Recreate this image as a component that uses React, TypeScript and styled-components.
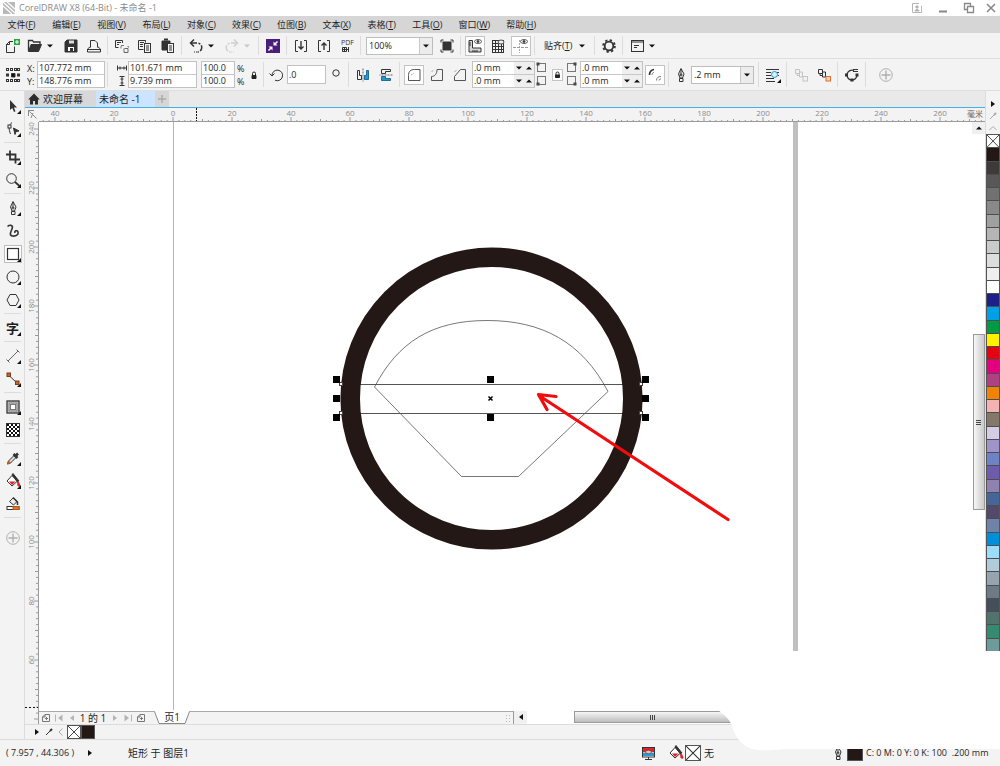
import React, { ReactNode, useEffect, useRef, useState } from "react";
import styled, { createGlobalStyle } from "styled-components";

const GlobalStyle = createGlobalStyle`
  * { box-sizing: border-box; }
  html, body { margin: 0; padding: 0; }
  body, button, input, select {
    font-family: "Open Sans", "Noto Sans CJK SC", sans-serif;
    font-size: 9px;
    line-height: 12px;
    color: #1e1e1e;
  }
  button { padding: 0; border: 0; background: none; }
`;

const Shell = styled.div`
  position: relative;
  display: flex;
  flex-direction: column;
  min-height: 100vh;
  overflow: hidden;
  background: #f3f3f3;
`;

/* ---------- title and menu ---------- */

const TitleBar = styled.header`
  display: flex;
  align-items: center;
  height: 16px;
  padding-left: 2px;
  background: #fff;
`;

const Title = styled.h1`
  flex: 1;
  margin: 0 0 0 3px;
  font-size: 9px;
  line-height: 16px;
  font-weight: 400;
  color: #8a8a8a;
`;

const WindowButton = styled.button<{ $narrow?: boolean }>`
  display: flex;
  align-items: center;
  justify-content: center;
  width: ${(p) => (p.$narrow ? 18 : 26)}px;
  height: 16px;
`;

const MenuBar = styled.nav`
  display: flex;
  height: 17px;
  background: #d6d6d6;
`;

const MenuItem = styled.button`
  min-width: 45px;
  padding: 0 9px 0 7px;
  white-space: nowrap;
`;

/* ---------- tool bars ---------- */

const Bar = styled.div<{ $height: number }>`
  display: flex;
  align-items: center;
  height: ${(p) => p.$height}px;
  border-bottom: 1px solid #dedede;
  white-space: nowrap;
`;

const Divider = styled.div`
  flex: none;
  align-self: stretch;
  width: 1px;
  margin: 3px 2px;
  background: #dcdcdc;
`;

const IconButton = styled.button<{ $width?: number; $active?: boolean; $indent?: number }>`
  flex: none;
  display: flex;
  align-items: center;
  justify-content: center;
  width: ${(p) => p.$width ?? 23}px;
  height: 20px;
  margin-left: ${(p) => p.$indent ?? 0}px;
  & > svg {
    background: ${(p) => (p.$active ? "#fff" : "none")};
    outline: ${(p) => (p.$active ? "1px solid #c4c4c4" : "none")};
  }
`;

const DropButton = styled.button`
  flex: none;
  display: flex;
  align-items: center;
  width: 13px;
  height: 20px;
  padding-left: 1px;
`;

const SnapButton = styled.button`
  flex: none;
  display: flex;
  align-items: center;
  gap: 7px;
  width: 55px;
  height: 20px;
  padding-left: 7px;
`;

const Caret = styled.span<{ $size?: number; $up?: boolean; $muted?: boolean }>`
  display: block;
  width: 0;
  height: 0;
  border: ${(p) => p.$size ?? 3}px solid transparent;
  border-top-color: ${(p) => (p.$up ? "transparent" : p.$muted ? "#c8c8c8" : "#111")};
  border-bottom-color: ${(p) => (p.$up ? "#111" : "transparent")};
  transform: translateY(${(p) => (p.$up ? "-25%" : "25%")});
`;

const SideCaret = styled.span<{ $left?: boolean; $muted?: boolean }>`
  display: block;
  width: 0;
  height: 0;
  border-style: solid;
  border-width: ${(p) => (p.$left ? "3px 4px 3px 0" : "3px 0 3px 4px")};
  border-color: transparent ${(p) => (p.$muted ? "#b4b4b4" : "#111")};
`;

const Combo = styled.div<{ $width: number; $indent: number }>`
  position: relative;
  flex: none;
  display: flex;
  width: ${(p) => p.$width}px;
  height: 18px;
  margin: 0 2px 0 ${(p) => p.$indent}px;
  border: 1px solid #bdbdbd;
  background: #fff;
`;

const ComboSelect = styled.select`
  appearance: none;
  flex: 1;
  min-width: 0;
  height: 16px;
  padding: 0 16px 0 2px;
  border: 0;
  background: transparent;
`;

const ComboArrow = styled.span`
  position: absolute;
  right: 0;
  top: 0;
  display: flex;
  align-items: center;
  justify-content: center;
  width: 13px;
  height: 16px;
  border-left: 1px solid #c8c8c8;
  background: #ececec;
  pointer-events: none;
`;

const Stack = styled.div<{ $width?: number; $indent?: number; $boxed?: boolean }>`
  flex: none;
  display: flex;
  flex-direction: column;
  width: ${(p) => (p.$width ? p.$width + "px" : "auto")};
  margin-left: ${(p) => p.$indent ?? 0}px;
  border: ${(p) => (p.$boxed ? "1px solid #c2c2c2" : "0")};
  background: ${(p) => (p.$boxed ? "#fff" : "none")};
`;

const FieldRow = styled.div`
  display: flex;
  height: 12px;
  & + & {
    height: 13px;
    border-top: 1px solid #c8c8c8;
  }
`;

const Field = styled.input`
  flex: 1;
  min-width: 0;
  height: 12px;
  padding: 0 1px;
  border: 0;
  background: transparent;
`;

const Spins = styled.span`
  display: flex;
  align-items: center;
  justify-content: space-around;
  width: 20px;
  height: 12px;
  background: #efefef;
`;

const StackLabel = styled.label`
  height: 13px;
  line-height: 13px;
`;

const StackIcon = styled.span`
  display: flex;
  align-items: center;
  justify-content: center;
  height: 13px;
`;

const RotationField = styled.input`
  flex: none;
  width: 39px;
  height: 19px;
  padding: 0 1px;
  border: 1px solid #c2c2c2;
  background: #fff;
`;

/* ---------- work area ---------- */

const WorkArea = styled.main`
  flex: 1;
  display: flex;
`;

const Toolbox = styled.div`
  flex: none;
  width: 24px;
  padding-top: 3px;
  background: #f3f3f3;
`;

const Tool = styled.button<{ $tall?: boolean }>`
  position: relative;
  display: flex;
  align-items: center;
  justify-content: center;
  width: 25px;
  height: ${(p) => (p.$tall ? 36 : 23)}px;
  font-size: 13px;
  font-weight: 700;
  line-height: 16px;
`;

const Flyout = styled.span`
  position: absolute;
  right: 4px;
  bottom: 3px;
  border-left: 4px solid transparent;
  border-bottom: 4px solid #111;
`;

const ToolDivider = styled.div`
  height: 1px;
  margin: 2px 3px 2px 4px;
  background: #dcdcdc;
`;

const DocumentColumn = styled.section`
  flex: 1;
  min-width: 0;
  display: flex;
  flex-direction: column;
  border-left: 1px solid #dcdcdc;
`;

const TabStrip = styled.div`
  display: flex;
  height: 16px;
  background: #e9e9e9;
`;

const Tab = styled.button<{ $width: number; $color: string; $pad?: number }>`
  display: flex;
  align-items: center;
  gap: 3px;
  width: ${(p) => p.$width}px;
  padding-left: ${(p) => p.$pad ?? 3}px;
  background: ${(p) => p.$color};
  font-size: 10px;
  white-space: nowrap;
`;

const RulerRow = styled.div`
  display: flex;
  height: 15px;
  border-top: 1px solid #3fb2e6;
  background: #f3f3f3;
`;

const RulerCorner = styled.div`
  flex: none;
  width: 14px;
  padding-left: 1px;
`;

const RulerScale = styled.div`
  position: relative;
  flex: 1;
  min-width: 0;
  border-bottom: 1px solid #9a9a9a;
`;

const RulerUnit = styled.span`
  position: absolute;
  right: 2px;
  top: 0;
  font-size: 8px;
  line-height: 11px;
  color: #666;
  background: #f3f3f3;
`;

const FillSvg = styled.svg`
  position: absolute;
  inset: 0;
  width: 100%;
  height: 100%;
`;

const DocumentBody = styled.div`
  flex: 1;
  display: flex;
`;

const SideRuler = styled.div`
  position: relative;
  flex: none;
  width: 14px;
  border-right: 1px solid #9a9a9a;
`;

const CanvasColumn = styled.div`
  flex: 1;
  min-width: 0;
  display: flex;
  flex-direction: column;
`;

const CanvasRow = styled.div`
  flex: 1;
  display: flex;
  background: #fff;
`;

const Canvas = styled.div`
  position: relative;
  flex: 1;
  min-height: 560px;
  overflow: hidden;
`;

const VScroll = styled.div`
  flex: none;
  display: flex;
  flex-direction: column;
  align-items: center;
  width: 13px;
`;

const ScrollButton = styled.button`
  flex: none;
  display: flex;
  align-items: center;
  justify-content: center;
  width: 13px;
  height: 12px;
  background: #f0f0f0;
`;

const VThumb = styled.div`
  display: flex;
  flex-direction: column;
  align-items: center;
  justify-content: center;
  gap: 1px;
  width: 12px;
  height: 176px;
  margin-top: 200px;
  border: 1px solid #9a9a9a;
  background: linear-gradient(90deg, #f6f6f6, #c9c9c9);
`;

const HThumb = styled.div`
  display: flex;
  align-items: center;
  justify-content: center;
  gap: 1px;
  width: 157px;
  height: 12px;
  margin-left: 47px;
  border: 1px solid #9a9a9a;
  background: linear-gradient(#f6f6f6, #bdbdbd);
`;

const Grip = styled.span<{ $across?: boolean }>`
  width: ${(p) => (p.$across ? 5 : 1)}px;
  height: ${(p) => (p.$across ? 1 : 5)}px;
  background: #444;
`;

const NavRow = styled.div`
  display: flex;
  height: 13px;
`;

const PageNav = styled.div`
  display: flex;
  align-items: center;
  width: 475px;
  border-top: 1px solid #a8a8a8;
  border-right: 1px solid #9a9a9a;
  background: #f3f3f3;
`;

const NavButton = styled.button`
  display: flex;
  align-items: center;
  justify-content: center;
  width: 13px;
  height: 12px;
`;

const PageCount = styled.span`
  width: 30px;
  font-size: 10px;
  text-align: center;
  white-space: nowrap;
`;

const PageTab = styled.button`
  position: relative;
  width: 36px;
  height: 14px;
  margin: -2px 0 0 7px;
  font-size: 10px;
  line-height: 14px;
  & > svg { position: absolute; left: 0; top: 0; }
  & > span { position: relative; }
`;

const SplitGrip = styled.span`
  width: 7px;
  height: 9px;
  margin: 0 1px 0 auto;
  background: radial-gradient(circle, #bbb 1px, transparent 1px) 0 0 / 3px 3px;
`;

const HTrack = styled.div`
  flex: 1;
  display: flex;
  background: #fff;
`;

const DocPalette = styled.div`
  display: flex;
  align-items: center;
  height: 15px;
  padding-left: 6px;
  border-top: 1px solid #dcdcdc;
`;

const PaletteButton = styled.button`
  display: flex;
  align-items: center;
  justify-content: center;
  width: 12px;
  height: 12px;
`;

const Swatch = styled.button<{ $color: string; $size?: number }>`
  flex: none;
  display: block;
  width: ${(p) => p.$size ?? 14}px;
  height: ${(p) => p.$size ?? 14}px;
  border: 1px solid #555;
  background: ${(p) => p.$color};
  & > svg { display: block; width: 100%; height: 100%; }
`;

const ColorRail = styled.aside`
  flex: none;
  display: flex;
  flex-direction: column;
  align-items: center;
  width: 15px;
  padding-top: 7px;
  border-left: 1px solid #dcdcdc;
`;

const ColorList = styled.div`
  display: flex;
  flex-direction: column;
  width: 14px;
  height: 518px;
  border: 1px solid #555;
  border-bottom: 0;
`;

const ColorCell = styled.button<{ $color: string }>`
  flex: 1;
  min-height: 0;
  background: ${(p) => p.$color};
  border-bottom: 1px solid #4d4d4d;
  & > svg { display: block; width: 100%; height: 100%; }
`;

/* ---------- status bar ---------- */

const StatusBar = styled.footer`
  display: flex;
  align-items: center;
  height: 27px;
  padding-left: 6px;
  border-top: 1px solid #dcdcdc;
  white-space: nowrap;
`;

const StatusPart = styled.div<{ $width?: number }>`
  display: flex;
  align-items: center;
  flex: ${(p) => (p.$width ? "none" : "1")};
  width: ${(p) => (p.$width ? p.$width + "px" : "auto")};
`;

const Coordinates = styled.span`
  width: 82px;
`;

const StatusText = styled.span<{ $gap?: number }>`
  margin-left: ${(p) => p.$gap ?? 0}px;
`;

const StatusName = styled(StatusText)`
  font-size: 10px;
`;

const Erased = styled.svg`
  position: absolute;
  right: 0;
  bottom: 15px;
  pointer-events: none;
`;

/* ---------- icons ---------- */

const INK = "#333";

function Icon({ children, size = 18, color = INK }: { children: ReactNode; size?: number; color?: string }) {
  return (
    <svg width={size} height={size} viewBox={`0 0 ${size} ${size}`} fill="none" stroke={color} strokeWidth="1">
      {children}
    </svg>
  );
}

const Plus = () => (
  <Icon color="#b0b0b0">
    <circle cx="9" cy="9" r="6.3" />
    <path d="M9 4.5v9M4.5 9h9" strokeWidth="1.4" />
  </Icon>
);

const NewIcon = () => (
  <Icon>
    <path d="M10 4.500H6.500L3.500 7.500v8h8V9.500M6.500 4.500v3h-3" />
    <rect x="11" y="2" width="6" height="6" fill="#2aa343" stroke="none" />
    <path d="M14 3v4M12 5h4" stroke="#fff" />
  </Icon>
);
const OpenIcon = () => (
  <Icon>
    <path d="M2.500 14V3.500h4l1 1.500h6.500v2.500" strokeWidth="1.300" />
    <path d="M2.500 14.500l2.500-7h10.500l-3 7z" fill={INK} />
  </Icon>
);
const SaveIcon = () => (
  <Icon>
    <path d="M3 5l2-2h10v12H3z" fill={INK} />
    <path d="M6 10h6v4H6z" fill="#fff" stroke="none" />
    <path d="M7 3.500h5v3H7z" fill="#ddd" stroke="none" />
    <path d="M8 11v3h3v-3z" fill={INK} stroke="none" />
  </Icon>
);
const PrintIcon = () => (
  <Icon>
    <path d="M5.500 10.500V3.500h4.500l2.500 2.500v4.500M5.500 9.500L2.500 12v3h13v-3l-3-2.500M2.500 12.500h13" />
  </Icon>
);
const CutIcon = () => (
  <Icon>
    <path d="M9.500 6V3.500h-7v7h3M4 5.500h4M4 7.500h2" />
    <path d="M8 8.500h3M8 9v2.500" stroke="#777" />
    <path d="M11.500 11.500h3.500v4h-4v-4M14.500 9.500h1v1" stroke="#666" />
  </Icon>
);
const CopyIcon = () => (
  <Icon>
    <path d="M7.500 12.500h-5v-9h7v2M4 5.500h4M4 7.500h3M4 9.500h3" />
    <rect x="8.500" y="6.500" width="6" height="9" />
    <path d="M10 9h3M10 11h3M10 13h3" />
  </Icon>
);
const PasteIcon = () => (
  <Icon>
    <path d="M3 4h8v2H8v7H3z" fill={INK} />
    <path d="M5 2.500h4" strokeWidth="2" />
    <rect x="8.500" y="6.500" width="6" height="9" fill="#f3f3f3" />
    <path d="M10 9h3M10 11h3M10 13h3" />
  </Icon>
);
const UndoIcon = () => (
  <Icon>
    <path d="M7 2.500L3.500 6 7 9.500" strokeWidth="1.500" />
    <path d="M4 6h6a4.500 4.500 0 0 1 .5 9" strokeWidth="1.500" strokeDasharray="6 1.500 2 1.500" />
    <path d="M10 15H6.500" strokeDasharray="1 1" />
  </Icon>
);
const RedoIcon = () => (
  <Icon color="#cfcfcf">
    <path d="M11 2.500L14.500 6 11 9.500" strokeWidth="1.500" />
    <path d="M14 6H8a4.500 4.500 0 0 0-.5 9" strokeWidth="1.500" strokeDasharray="6 1.500 2 1.500" />
    <path d="M8 15h3.500" strokeDasharray="1 1" />
  </Icon>
);
const ConnectIcon = () => (
  <Icon>
    <rect x="2" y="2" width="14" height="14" fill="#4b1d7a" stroke="none" />
    <path d="M4.500 13.500l3-3M13.500 4.500l-3 3" stroke="#fff" strokeWidth="1.500" />
    <path d="M4.500 9.500h4v4zM13.500 8.500h-4v-4z" fill="#fff" stroke="none" />
  </Icon>
);
const ImportIcon = ({ up }: { up?: boolean }) => (
  <Icon>
    <path d="M6 3.500H3.500v11H6M12 3.500h2.500v11H12" />
    <path d={up ? "M9 13V6M6.500 8.500L9 6l2.500 2.500" : "M9 4v8M6.500 9.500L9 12l2.500-2.500"} strokeWidth="1.400" />
  </Icon>
);
const PdfIcon = () => (
  <Icon>
    <text x="3" y="8" fontSize="7" fill={INK} stroke="none">PDF</text>
    <path d="M4.500 10.500h4v4h-4zM4.500 12.500h6M6.500 10.500v4M10.500 10v5" />
  </Icon>
);
const FullScreenIcon = () => (
  <Icon>
    <rect x="5" y="5" width="8" height="8" fill={INK} />
    <path d="M3 5.500V3h2.500M12.500 3H15v2.500M15 12.500V15h-2.500M5.500 15H3v-2.500" />
  </Icon>
);
const Eye = () => (
  <g strokeWidth=".8">
    <ellipse cx="12" cy="4.500" rx="3.500" ry="2" />
    <circle cx="12" cy="4.500" r="1" fill={INK} />
  </g>
);
const RulersIcon = () => (
  <Icon>
    <path d="M3 3.500h3.500v7.500H15v4H3z" fill="#d5d5d5" />
    <path d="M3 6h2M3 8h2M7 15v-2M9 15v-2M11 15v-2" />
    <Eye />
  </Icon>
);
const GridIcon = () => (
  <Icon>
    <path d="M3 3.500h12M3 6.500h12M3 9.500h12M3 12.500h12M3 15.500h12M3.500 3v13M6.500 3v13M9.500 3v13M12.500 3v13M14.500 3v13" />
    <ellipse cx="12" cy="5" rx="3" ry="2" fill="#eee" strokeWidth=".8" />
  </Icon>
);
const GuidesIcon = () => (
  <Icon>
    <path d="M7.500 3v13" strokeDasharray="2 1" stroke="#aaa" />
    <path d="M1 10.500h15" strokeDasharray="3 1" stroke="#999" />
    <Eye />
  </Icon>
);
const GearIcon = () => (
  <Icon>
    <circle cx="9" cy="9" r="4.300" strokeWidth="1.800" />
    <circle cx="9" cy="9" r="5.900" strokeWidth="1.800" strokeDasharray="2.300 2.334" />
  </Icon>
);
const LaunchIcon = () => (
  <Icon>
    <rect x="3.500" y="3.500" width="12" height="11" />
    <path d="M3.500 5h12M6 8.500h5M6 10.500h3" />
  </Icon>
);
const OriginIcon = () => (
  <Icon>
    {[3.5, 7.5, 11.5, 14.5].flatMap((x) =>
      [3.5, 9, 14.5]
        .filter((y) => y !== 9 || x < 4 || x > 14)
        .map((y) => <rect key={`${x}-${y}`} x={x - 1} y={y - 1} width="2" height="2" fill="#f3f3f3" />)
    )}
    <path d="M7.500 7.500h3.500v3.500H7.500z" fill="#111" />
  </Icon>
);
const LockIcon = () => (
  <svg width="8" height="10" viewBox="0 0 8 10" fill="none" stroke="#222">
    <path d="M2.500 5V3.500a1.500 1.500 0 0 1 3 0V5" />
    <path d="M2 5.500h4v3H2z" fill="#222" />
  </svg>
);
const BoxedLockIcon = () => (
  <svg width="11" height="12" viewBox="0 0 11 12" fill="none" stroke="#222">
    <rect x=".5" y=".5" width="10" height="11" fill="#fff" stroke="#c4c4c4" />
    <path d="M4 6V4.500a1.500 1.500 0 0 1 3 0V6" />
    <path d="M3.500 6h4v2.500h-4z" fill="#222" />
  </svg>
);
const RotateIcon = () => (
  <Icon>
    <path d="M4 9.500a5.300 5.300 0 1 1 3 4.700" />
    <path d="M1.500 7.500L4 10l2.500-2.500" />
  </Icon>
);
const DegreeIcon = () => (
  <Icon>
    <circle cx="9" cy="7" r="3.200" />
  </Icon>
);
const MirrorIcon = ({ vertical }: { vertical?: boolean }) => (
  <Icon>
    <g transform={vertical ? "rotate(90 9 9)" : undefined}>
      <path d="M3.500 4.500h2v5h2v4h-4z" />
      <path d="M9 2.500v13" strokeDasharray="2 1" stroke="#666" />
      <path d="M14.500 4.500h-2v5h-2v4h4z" fill="#2b96c8" stroke="#1c6f99" />
    </g>
  </Icon>
);
const CornerIcon = ({ kind }: { kind: "round" | "scallop" | "chamfer" }) => (
  <Icon color="#555">
    <path
      d={
        kind === "round"
          ? "M3.500 14.500V9.500c0-4 2-6 6-6h5.500v11z"
          : kind === "scallop"
          ? "M3.500 14.500V10.500c3.500 0 5.500-3 5.500-7h5.500v11z"
          : "M3.500 14.500V10.500l6-7h5v11z"
      }
    />
    <path d={kind === "round" ? "M6 9l3-2" : "M3.500 6l2.500-2.500"} stroke="#888" strokeDasharray="1 1" />
  </Icon>
);
const CornerSpot = ({ x, y }: { x: number; y: number }) => (
  <svg width="12" height="12" viewBox="0 0 12 12" fill="none" stroke="#777">
    <rect x="1.500" y="1.500" width="8" height="8" />
    <rect x={x} y={y} width="2" height="2" fill="#555" stroke="#444" />
  </svg>
);
const RelativeIcon = () => (
  <Icon>
    <path d="M3.500 9c0-3 1.500-5 4.500-5.500" strokeWidth="1.700" />
    <path d="M6 9c0-1.500 .5-2.500 2-2.500" stroke="#888" />
    <path d="M10.500 14.500c0-2.500 1.500-4 4.500-4M13 14.500c0-1 .5-1.500 2-1.500" stroke="#777" />
  </Icon>
);
const PenIcon = () => (
  <Icon>
    <path d="M9 2.500L6.500 8l1.500 4h2.500L12 8zM9 3v6M7.500 12.500v3h3.500v-3z" />
    <circle cx="9" cy="9" r="1" />
  </Icon>
);
const WrapIcon = () => (
  <Icon>
    <path d="M2 3.500h13M2 6.500h5M2 9.500h5M2 12.500h8M2 15.500h9M13 6.500h2M14 9.500h1" />
    <circle cx="10.500" cy="8.500" r="3" fill="#d6effb" stroke="#1b93cf" />
    <path d="M17 13v4h-4z" fill="#111" stroke="none" />
  </Icon>
);
const OrderIcon = ({ muted }: { muted?: boolean }) => (
  <Icon color={muted ? "#c4c4c4" : INK}>
    <path d="M3.500 3.500h4v4h-4zM5 8v1.500h3M7.500 6h3v5h-3z" />
    <rect x="11" y="10.500" width="4.500" height="4.500" stroke={muted ? "#c4c4c4" : "#e2702c"} fill={muted ? "none" : "#f8d3bb"} />
  </Icon>
);
const CurveIcon = () => (
  <Icon>
    <path d="M11 4.500a5 5 0 1 0 3 4.500" strokeWidth="1.300" />
    <path d="M10 3.500h5M10 5.500h5" />
    <rect x="2.500" y="8" width="2" height="2" fill={INK} />
    <rect x="8" y="13" width="2" height="2" fill={INK} />
    <rect x="13" y="8" width="2" height="2" fill={INK} />
  </Icon>
);

const PickIcon = () => (
  <Icon>
    <path d="M6 3v10l2.300-2 1.700 4 1.500-.8-1.600-3.700H13z" fill={INK} stroke="none" />
  </Icon>
);
const ShapeIcon = () => (
  <Icon>
    <path d="M8 2.500C4.500 5 4.500 9 6.500 14" />
    <rect x="4" y="5" width="3" height="3" fill="#f3f3f3" />
    <path d="M9.500 8l5.500 3-3 .5-1 3z" fill={INK} />
  </Icon>
);
const CropIcon = () => (
  <Icon>
    <path d="M6 2.500v9h10M2 6.500h9.500v9" strokeWidth="1.800" />
  </Icon>
);
const ZoomIcon = () => (
  <Icon>
    <circle cx="7.500" cy="7.500" r="4.800" />
    <path d="M11 11l4.500 4" strokeWidth="1.800" />
  </Icon>
);
const FreehandIcon = () => (
  <Icon>
    <path d="M3.500 4.500c3-2.500 6-1 4.500 2.500S5 13.500 8.500 14s6.500-1.500 5.500-4-4-1-3 1" strokeWidth="1.600" />
  </Icon>
);
const RectIcon = () => (
  <Icon>
    <rect x=".5" y=".5" width="17" height="17" fill="#fff" stroke="#bcbcbc" />
    <rect x="3.500" y="3.500" width="11" height="11" strokeWidth="1.200" />
  </Icon>
);
const EllipseIcon = () => (
  <Icon>
    <circle cx="9" cy="9" r="6" />
  </Icon>
);
const PolygonIcon = () => (
  <Icon>
    <path d="M6 3.500h6L15 9l-3 5.500H6L3 9z" />
  </Icon>
);
const DimensionIcon = () => (
  <Icon color="#666">
    <path d="M4 14L14 4M2.500 12.500l3 3M12.500 2.500l3 3" />
  </Icon>
);
const ConnectorIcon = () => (
  <Icon>
    <path d="M4.500 5L13 13" />
    <rect x="3" y="3" width="3.500" height="3.500" fill="#c0672b" stroke="#7d3c12" />
    <rect x="11.500" y="11" width="3.500" height="3.500" fill="#c0672b" stroke="#7d3c12" />
  </Icon>
);
const ContourIcon = () => (
  <Icon>
    <rect x="3" y="3" width="12" height="12" fill="#d8d8d8" strokeWidth="1.300" />
    <rect x="5" y="5" width="8" height="8" stroke="#777" />
    <rect x="6.500" y="6.500" width="5" height="5" fill="#fff" stroke="#777" />
  </Icon>
);
const CheckerIcon = () => (
  <Icon>
    <rect x="2.500" y="2.500" width="13" height="13" fill="#fff" />
    {[0, 1, 2, 3, 4, 5].flatMap((r) =>
      [0, 1, 2].map((c) => (
        <rect key={`${r}-${c}`} x={3 + c * 4 + (r % 2) * 2} y={3 + r * 2} width="2" height="2" fill="#111" stroke="none" />
      ))
    )}
  </Icon>
);
const DropperIcon = () => (
  <Icon>
    <path d="M3.500 15l1-3 5.500-5.500 2 2L6.500 14z" fill="#ddd" />
    <path d="M3.500 15l1-3 2 2z" fill="#d9752f" stroke="#b0561b" />
    <path d="M9.500 5l4 4M12 6.500l2-2" strokeWidth="2.600" />
  </Icon>
);
const FillIcon = () => (
  <Icon>
    <path d="M3 9l5-5.500 5.500 5.500-5.500 5z" fill="#fff" />
    <path d="M8 3l1-1.500L15 9l-2 .5z" fill={INK} />
    <path d="M5 9.500h6.500L8 13z" fill="#e0232a" stroke="none" />
    <path d="M13 10h2l1.500 3.500-1 1.500-2-1z" fill="#e0232a" stroke="none" />
  </Icon>
);
const SmartFillIcon = () => (
  <Icon>
    <path d="M5.500 6.500L9 3l4 3.500L9.500 10z" fill="#eee" />
    <path d="M9 2.500L13.500 7v3" strokeWidth="1.500" />
    <rect x="3" y="11.500" width="12" height="3" fill="#fff" />
    <rect x="9" y="11.500" width="6" height="3" fill="#d9752f" stroke="#b0561b" />
  </Icon>
);
const HomeIcon = () => (
  <svg width="12" height="12" viewBox="0 0 12 12" fill="#2c2c2c">
    <path d="M6 .5L.2 6.500H2V11.500h3V8h2v3.500h3v-5h1.800z" />
  </svg>
);
const MiniDropper = ({ muted }: { muted?: boolean }) => (
  <Icon size={10} color={muted ? "#aaa" : INK}>
    <path d="M2 8l4-4" />
    <path d="M6 4l2-2" strokeWidth="2" />
  </Icon>
);
const Chevron = ({ up }: { up?: boolean }) => (
  <Icon size={10} color="#aaa">
    <path d={up ? "M1.500 7L5 3.500 8.500 7" : "M6.500 1.500L3 5l3.500 3.500"} />
  </Icon>
);
const Cross = () => (
  <svg viewBox="0 0 12 12" preserveAspectRatio="none" stroke="#333" strokeWidth=".9">
    <path d="M0 0l12 12M12 0L0 12" />
  </svg>
);
const PageIcon = () => (
  <Icon size={10} color="#777">
    <path d="M4 1.500h4.500v7h-7V4zM4 1.500V4H1.500M5.500 4v3M4 5.500h3" />
  </Icon>
);
const JumpIcon = ({ last }: { last?: boolean }) => (
  <Icon size={10} color="#b4b4b4">
    <g transform={last ? "rotate(180 5 5)" : undefined}>
      <path d="M1.500 1.500v7" />
      <path d="M8.500 1.500v7L4 5z" fill="#b4b4b4" stroke="none" />
    </g>
  </Icon>
);
const ProofIcon = () => (
  <Icon>
    <rect x="2.500" y="3.500" width="12" height="9.500" fill="#fff" />
    <path d="M3 4h11v4H3z" fill="#e0232a" stroke="none" />
    <path d="M3 8.500h11V12H3z" fill="#2b9bd8" stroke="none" />
    <ellipse cx="8.500" cy="8" rx="3" ry="1.800" fill="#f3b7b9" strokeWidth=".6" />
    <path d="M5 15.500h7M8.500 13v2" />
  </Icon>
);

/* ---------- data ---------- */

const MENUS: [string, string][] = [
  ["文件", "F"], ["编辑", "E"], ["视图", "V"], ["布局", "L"], ["对象", "C"], ["效果", "C"],
  ["位图", "B"], ["文本", "X"], ["表格", "T"], ["工具", "O"], ["窗口", "W"], ["帮助", "H"],
];

const COLORS = [
  "#231815", "#3e3a39", "#595757", "#727171", "#898989", "#9fa0a0", "#b5b5b6", "#c9caca", "#dcdddd",
  "#efefef", "#ffffff", "#1d2088", "#00a0e9", "#009944", "#fff100", "#e60012", "#e4007f", "#ae4084",
  "#f08300", "#f5b2b2", "#84786b", "#d3cde6", "#a093c7", "#6c84c5", "#6e5bab", "#8f82b0", "#46659b",
  "#54486b", "#6d84a8", "#0090db", "#9bddfb", "#b0cbd9", "#94a5b0", "#6c7b86", "#454f5b", "#50736e",
  "#358a70", "#6c9b99",
];

const TOOLS: ([string, ReactNode, boolean] | null)[] = [
  ["选择", <PickIcon />, true], ["形状", <ShapeIcon />, true], null,
  ["裁剪", <CropIcon />, true], ["缩放", <ZoomIcon />, true], null,
  ["手绘", <PenIcon />, true], ["艺术笔", <FreehandIcon />, false], ["矩形", <RectIcon />, true],
  ["椭圆形", <EllipseIcon />, true], ["多边形", <PolygonIcon />, true], null,
  ["文本", "字", true], null,
  ["平行度量", <DimensionIcon />, true], ["连接器", <ConnectorIcon />, true], null,
  ["轮廓图", <ContourIcon />, true], ["透明度", <CheckerIcon />, false], null,
  ["颜色滴管", <DropperIcon />, true], ["交互式填充", <FillIcon />, true], ["智能填充", <SmartFillIcon />, false], null,
];

/* ---------- pieces ---------- */

const Btn = ({ label, children, ...rest }: { label: string; children: ReactNode; $width?: number; $active?: boolean; $indent?: number }) => (
  <IconButton aria-label={label} {...rest}>{children}</IconButton>
);

const Drop = ({ label, muted }: { label: string; muted?: boolean }) => (
  <DropButton aria-label={label}><Caret $muted={muted} /></DropButton>
);

function FieldPair({ names, values, ids, width, indent, spin }: {
  names: string[]; values: string[]; ids?: string[]; width: number; indent?: number; spin?: boolean;
}) {
  return (
    <Stack $width={width} $indent={indent} $boxed>
      {values.map((v, i) => (
        <FieldRow key={i}>
          <Field id={ids?.[i]} aria-label={names[i]} defaultValue={v} />
          {spin && <Spins><Caret $size={3} /><Caret $size={3} $up /></Spins>}
        </FieldRow>
      ))}
    </Stack>
  );
}

const STEP = 59;

/* Length of a ruler, so that only the marks that fit on it are drawn. */
function useExtent(side: "clientWidth" | "clientHeight") {
  const ref = useRef<HTMLDivElement>(null);
  const [extent, setExtent] = useState(0);
  useEffect(() => {
    const el = ref.current;
    if (!el) return;
    const measure = () => setExtent(el[side]);
    measure();
    const observer = new ResizeObserver(measure);
    observer.observe(el);
    return () => observer.disconnect();
  }, [side]);
  return [ref, extent] as const;
}

function TopRuler() {
  const [ref, extent] = useExtent("clientWidth");
  const zero = 134;
  const at = (m: number) => zero + (m * STEP) / 10;
  const marks = Array.from({ length: Math.max(0, Math.floor((extent - zero) / 5.9) + 23) }, (_, i) => i - 22);
  return (
    <RulerScale ref={ref}>
      <FillSvg aria-hidden="true">
        {marks.map((m) => (
          <line key={m} x1={at(m)} x2={at(m)} y1={m % 10 === 0 ? 9 : m % 5 === 0 ? 11 : 12} y2="13" stroke="#9a9a9a" />
        ))}
        {marks.filter((m) => m % 10 === 0 && at(m) < extent - 30).map((m) => (
          <text key={m} x={at(m)} y="8" fontSize="8" textAnchor="middle" fill="#8c8c8c">{Math.abs(m * 2)}</text>
        ))}
        <path d="M157.500 0v14" stroke="#111" strokeDasharray="2 1" />
      </FillSvg>
      <RulerUnit>毫米</RulerUnit>
    </RulerScale>
  );
}

function LeftRuler() {
  const [ref, extent] = useExtent("clientHeight");
  const first = 7;
  const at = (m: number) => first + (m * STEP) / 10;
  const marks = Array.from({ length: Math.max(0, Math.floor((extent - first) / 5.9) + 1) }, (_, i) => i);
  return (
    <SideRuler ref={ref}>
      <FillSvg aria-hidden="true">
        {marks.map((m) => (
          <line key={m} x1={m % 10 === 0 ? 9 : m % 5 === 0 ? 10 : 11} x2="13" y1={at(m)} y2={at(m)} stroke="#9a9a9a" />
        ))}
        {marks.filter((m) => m % 10 === 0 && at(m) < extent - 16).map((m) => (
          <text key={m} transform={`translate(9 ${at(m)}) rotate(-90)`} fontSize="8" textAnchor="middle" fill="#8c8c8c">
            {Math.abs(240 - m * 2)}
          </text>
        ))}
        <path d="M0 585.500h13" stroke="#111" strokeDasharray="2 2" />
      </FillSvg>
    </SideRuler>
  );
}

function Drawing() {
  return (
    <FillSvg role="img" aria-label="图层1">
      <g transform="translate(-39 -122)" fill="none">
        <path d="M173.500 100v2000" stroke="#b5b5b5" />
        <rect x="793" y="100" width="5" height="2000" fill="#c0c0c0" />
        <path d="M341 384.500h301M341 413.500h301" stroke="#555" />
        <path
          d="M374.500 387C398 342 432 320.500 487 320.500S582 342 608 391.500L518.500 476.500H461.500Z"
          stroke="#555"
          strokeWidth=".8"
        />
        <circle cx="491.500" cy="398.500" r="141.300" stroke="#231815" strokeWidth="19.600" />
        {[341, 641].flatMap((x) =>
          [384, 413].map((y) => <rect key={`${x}-${y}`} x={x - 1.5} y={y - 1.5} width="3" height="3" fill="#fff" stroke="#444" />)
        )}
        {[336, 490.5, 645.5].flatMap((x) =>
          [379.5, 398.5, 417.5]
            .filter((y) => !(x === 490.5 && y === 398.5))
            .map((y) => <rect key={`${x}-${y}`} x={Math.floor(x - 3)} y={y - 3.5} width="7" height="7" fill="#000" />)
        )}
        <path d="M488.500 396.500l4 4M492.500 396.500l-4 4" stroke="#000" strokeWidth="1.500" />
        <path d="M728 519.500L539 395.500M556 396.500L538.500 394.500 547 409.500" stroke="#f20d0d" strokeWidth="3.200" strokeLinecap="round" strokeLinejoin="round" />
      </g>
    </FillSvg>
  );
}

export default function App() {
  return (
    <Shell>
      <GlobalStyle />
      <TitleBar>
        <svg width="14" height="14" viewBox="0 0 14 14" aria-hidden="true">
          <rect x="1" y="1" width="12" height="12" fill="#b9b9b9" />
          <path d="M1 1l12 11M5 1l8 7M1 5l9 8" stroke="#fff" strokeWidth="1.200" />
        </svg>
        <Title>CorelDRAW X8 (64-Bit) - 未命名 -1</Title>
        <WindowButton aria-label="登录">
          <Icon size={12} color="#b5b5b5">
            <path d="M8 1.500H1.500v9h9V4" />
            <circle cx="6" cy="5" r="1.200" fill="#aaa" />
            <path d="M4 9c0-2 4-2 4 0z" fill="#aaa" />
          </Icon>
        </WindowButton>
        <WindowButton aria-label="最小化">
          <Icon size={12} color="#888"><path d="M2 9.500h8" strokeWidth="2" /></Icon>
        </WindowButton>
        <WindowButton aria-label="还原">
          <Icon size={12} color="#888"><path d="M4 7.500H1.500v-6h6V4M4.500 4.500h6v6h-6z" strokeWidth="1.300" /></Icon>
        </WindowButton>
        <WindowButton aria-label="关闭" $narrow>
          <Icon size={12} color="#888"><path d="M2 2l8 8M10 2l-8 8" strokeWidth="1.600" /></Icon>
        </WindowButton>
      </TitleBar>

      <MenuBar>
        {MENUS.map(([name, key]) => (
          <MenuItem key={name}>{name}(<u>{key}</u>)</MenuItem>
        ))}
      </MenuBar>

      <Bar $height={26}>
        <Btn label="新建"><NewIcon /></Btn>
        <Btn label="打开"><OpenIcon /></Btn>
        <Drop label="最近的文档" />
        <Btn label="保存"><SaveIcon /></Btn>
        <Btn label="打印"><PrintIcon /></Btn>
        <Divider />
        <Btn label="剪切"><CutIcon /></Btn>
        <Btn label="复制"><CopyIcon /></Btn>
        <Btn label="粘贴"><PasteIcon /></Btn>
        <Divider />
        <Btn label="撤消"><UndoIcon /></Btn>
        <Drop label="撤消列表" />
        <Btn label="重做"><RedoIcon /></Btn>
        <Drop label="重做列表" muted />
        <Divider />
        <Btn label="搜索内容"><ConnectIcon /></Btn>
        <Divider />
        <Btn label="导入"><ImportIcon /></Btn>
        <Btn label="导出"><ImportIcon up /></Btn>
        <Btn label="发布为 PDF"><PdfIcon /></Btn>
        <Divider />
        <Combo $width={67} $indent={3}>
          <ComboSelect aria-label="缩放级别" defaultValue="100%"><option>100%</option></ComboSelect>
          <ComboArrow><Caret /></ComboArrow>
        </Combo>
        <Btn label="全屏预览"><FullScreenIcon /></Btn>
        <Divider />
        <Btn label="显示标尺" $active><RulersIcon /></Btn>
        <Btn label="显示网格"><GridIcon /></Btn>
        <Btn label="显示辅助线" $active><GuidesIcon /></Btn>
        <Divider />
        <SnapButton><span>贴齐(<u>T</u>)</span><Caret /></SnapButton>
        <Divider />
        <Btn label="选项"><GearIcon /></Btn>
        <Divider />
        <Btn label="应用程序启动器"><LaunchIcon /></Btn>
        <Drop label="启动器列表" />
      </Bar>

      <Bar $height={32}>
        <Btn label="对象原点" $indent={1}><OriginIcon /></Btn>
        <Stack $width={10} $indent={3}>
          <StackLabel htmlFor="pos-x">X:</StackLabel>
          <StackLabel htmlFor="pos-y">Y:</StackLabel>
        </Stack>
        <FieldPair names={["X", "Y"]} ids={["pos-x", "pos-y"]} values={["107.772 mm", "148.776 mm"]} width={68} />
        <Divider />
        <Stack $width={13} $indent={5}>
          <StackIcon><Icon size={12}><path d="M1.500 3.500v5M10.500 3.500v5M2 6h8M4 4.500v3M8 4.500v3" /></Icon></StackIcon>
          <StackIcon><Icon size={12}><path d="M3.500 1.500h5M3.500 10.500h5M6 2v8M4.500 4h3M4.500 8h3" /></Icon></StackIcon>
        </Stack>
        <FieldPair names={["宽度", "高度"]} values={["101.671 mm", "9.739 mm"]} width={69} />
        <FieldPair names={["水平缩放", "垂直缩放"]} ids={["scale-x", "scale-y"]} values={["100.0", "100.0"]} width={34} indent={4} />
        <Stack $width={9} $indent={2}>
          <StackLabel htmlFor="scale-x">%</StackLabel>
          <StackLabel htmlFor="scale-y">%</StackLabel>
        </Stack>
        <Btn label="锁定比率" $width={15}><LockIcon /></Btn>
        <Divider />
        <Btn label="旋转" $width={21}><RotateIcon /></Btn>
        <RotationField aria-label="旋转角度" defaultValue=".0" />
        <Btn label="度" $width={20}><DegreeIcon /></Btn>
        <Divider />
        <Btn label="水平镜像"><MirrorIcon /></Btn>
        <Btn label="垂直镜像"><MirrorIcon vertical /></Btn>
        <Divider />
        <Btn label="圆角" $active><CornerIcon kind="round" /></Btn>
        <Btn label="扇形角"><CornerIcon kind="scallop" /></Btn>
        <Btn label="倒棱角"><CornerIcon kind="chamfer" /></Btn>
        <FieldPair names={["左上角半径", "左下角半径"]} values={[".0 mm", ".0 mm"]} width={63} indent={1} spin />
        <Stack $width={14}>
          <StackIcon><CornerSpot x={1} y={1} /></StackIcon>
          <StackIcon><CornerSpot x={1} y={8} /></StackIcon>
        </Stack>
        <Btn label="同时编辑所有角" $width={16}><BoxedLockIcon /></Btn>
        <Stack $width={14}>
          <StackIcon><CornerSpot x={8} y={1} /></StackIcon>
          <StackIcon><CornerSpot x={8} y={8} /></StackIcon>
        </Stack>
        <FieldPair names={["右上角半径", "右下角半径"]} values={[".0 mm", ".0 mm"]} width={63} indent={1} spin />
        <Btn label="相对角缩放" $active><RelativeIcon /></Btn>
        <Divider />
        <Btn label="轮廓笔" $width={20}><PenIcon /></Btn>
        <Combo $width={63} $indent={0}>
          <ComboSelect aria-label="轮廓宽度" defaultValue=".2 mm"><option>.2 mm</option></ComboSelect>
          <ComboArrow><Caret /></ComboArrow>
        </Combo>
        <Divider />
        <Btn label="文本换行"><WrapIcon /></Btn>
        <Divider />
        <Btn label="到图层前面"><OrderIcon muted /></Btn>
        <Btn label="到图层后面"><OrderIcon /></Btn>
        <Divider />
        <Btn label="转换为曲线"><CurveIcon /></Btn>
        <Divider />
        <Btn label="快速自定义" $indent={6}><Plus /></Btn>
      </Bar>

      <WorkArea>
        <Toolbox>
          {TOOLS.map((t, i) =>
            t === null ? (
              <ToolDivider key={i} />
            ) : (
              <Tool key={i} aria-label={t[0]}>
                {t[1]}
                {t[2] && <Flyout />}
              </Tool>
            )
          )}
          <Tool aria-label="快速自定义工具箱" $tall><Plus /></Tool>
        </Toolbox>

        <DocumentColumn>
          <TabStrip>
            <Tab $width={71} $color="#d8d8d8"><HomeIcon />欢迎屏幕</Tab>
            <Tab $width={59} $color="#cce4ff">未命名 -1</Tab>
            <Tab $width={14} $color="#d6d6d6" $pad={2} aria-label="新建文档">
              <Icon size={10} color="#aaa"><path d="M5 1v8M1 5h8" strokeWidth="1.500" /></Icon>
            </Tab>
          </TabStrip>
          <RulerRow>
            <RulerCorner>
              <Icon size={12} color="#888"><path d="M3.500 3.500l7 7M2 2.500h6M2.500 2v6M7 5L5 10" /></Icon>
            </RulerCorner>
            <TopRuler />
          </RulerRow>
          <DocumentBody>
            <LeftRuler />
            <CanvasColumn>
              <CanvasRow>
                <Canvas><Drawing /></Canvas>
                <VScroll>
                  <ScrollButton aria-label="向上滚动"><Caret $size={3} $up /></ScrollButton>
                  <VThumb><Grip $across /><Grip $across /><Grip $across /></VThumb>
                </VScroll>
              </CanvasRow>
              <NavRow>
                <PageNav>
                  <NavButton aria-label="在前面添加页"><PageIcon /></NavButton>
                  <NavButton aria-label="第一页"><JumpIcon /></NavButton>
                  <NavButton aria-label="上一页"><SideCaret $left $muted /></NavButton>
                  <PageCount>1 的 1</PageCount>
                  <NavButton aria-label="下一页"><SideCaret $muted /></NavButton>
                  <NavButton aria-label="最后一页"><JumpIcon last /></NavButton>
                  <NavButton aria-label="在后面添加页"><PageIcon /></NavButton>
                  <PageTab>
                    <svg width="36" height="14" viewBox="0 0 36 14" aria-hidden="true">
                      <path d="M0 0h36L31 13.500H5z" fill="#fff" />
                      <path d="M.5 1.500L5 13.500h26L35.500 1.500" fill="none" stroke="#888" />
                    </svg>
                    <span>页1</span>
                  </PageTab>
                  <SplitGrip />
                </PageNav>
                <ScrollButton aria-label="向左滚动"><SideCaret $left /></ScrollButton>
                <HTrack><HThumb><Grip /><Grip /><Grip /></HThumb></HTrack>
              </NavRow>
            </CanvasColumn>
          </DocumentBody>
          <DocPalette>
            <PaletteButton aria-label="调色板选项"><SideCaret /></PaletteButton>
            <PaletteButton aria-label="滴管"><MiniDropper /></PaletteButton>
            <PaletteButton aria-label="向左"><Chevron /></PaletteButton>
            <Swatch aria-label="无填充" $color="#fff"><Cross /></Swatch>
            <Swatch aria-label="黑" $color="#231815" />
          </DocPalette>
        </DocumentColumn>

        <ColorRail>
          <PaletteButton aria-label="默认调色板选项"><SideCaret /></PaletteButton>
          <PaletteButton aria-label="颜色滴管"><MiniDropper muted /></PaletteButton>
          <PaletteButton aria-label="向上滚动调色板"><Chevron up /></PaletteButton>
          <ColorList>
            <ColorCell aria-label="无" $color="#fff"><Cross /></ColorCell>
            {COLORS.map((c) => <ColorCell key={c} aria-label={c} $color={c} />)}
          </ColorList>
        </ColorRail>
      </WorkArea>

      <StatusBar>
        <Coordinates>( 7.957 , 44.306 )</Coordinates>
        <StatusPart $width={40}><SideCaret /></StatusPart>
        <StatusPart><StatusName>矩形 于 图层1</StatusName></StatusPart>
        <StatusPart $width={27}><ProofIcon /></StatusPart>
        <StatusPart $width={162}>
          <FillIcon />
          <Swatch aria-label="填充颜色" $color="#fff" $size={16}><Cross /></Swatch>
          <StatusName $gap={3}>无</StatusName>
        </StatusPart>
        <StatusPart $width={171}>
          <PenIcon />
          <Swatch aria-label="轮廓颜色" $color="#231815" $size={16} />
          <StatusText $gap={3}>C: 0 M: 0 Y: 0 K: 100&nbsp; .200 mm</StatusText>
        </StatusPart>
      </StatusBar>

      <Erased width="285" height="101" viewBox="0 0 285 101" aria-hidden="true">
        <path d="M0 1V60H3C12 67 16 71 18 79C22 90 30 100 45 100C58 101 62 99 74 99H285V1Z" fill="#fff" />
      </Erased>
    </Shell>
  );
}
